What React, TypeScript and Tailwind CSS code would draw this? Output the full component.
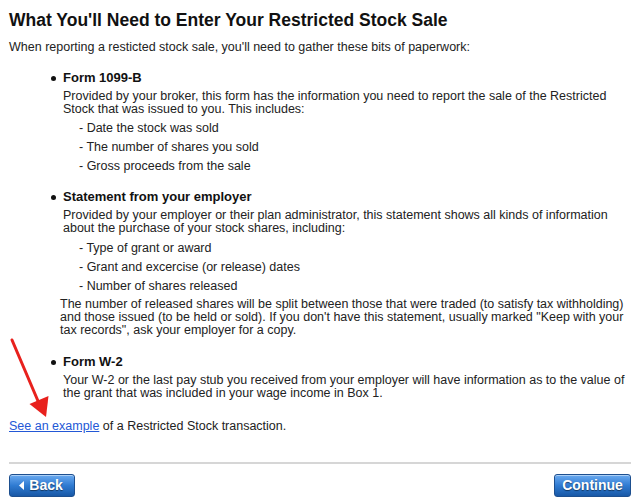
import React from "react"

const dashItem = "ml-[16px] leading-[19px]"

function Bullet({ title, className }: { title: string; className?: string }) {
  return (
    <div className={"flex items-center leading-[16px] " + (className ?? "")}>
      <span className="ml-[42px] mr-[7px] size-[5px] rounded-full bg-[#111]" />
      <span className="text-[13px] font-bold text-[#111]">{title}</span>
    </div>
  )
}

function BlueButton({ children, className }: { children: React.ReactNode; className?: string }) {
  return (
    <button
      type="button"
      className={
        "flex h-[23px] items-center justify-center rounded-[3px] border border-[#1d4f8f] bg-gradient-to-b from-[#6aaaf0] via-[#2f7bd2] to-[#1858a6] text-[14px] font-bold text-white shadow-[inset_0_1px_0_rgba(255,255,255,0.45)] [text-shadow:0_1px_1px_rgba(0,0,0,0.5)] " +
        (className ?? "")
      }
    >
      {children}
    </button>
  )
}

export default function App() {
  return (
    <div className="relative h-[504px] w-[640px] overflow-hidden whitespace-nowrap bg-white px-[9px] pt-[9px] font-['Liberation_Sans',Arial,sans-serif] text-[12.5px] text-[#222]">
      <h1 className="text-[17.5px] font-bold leading-[22px] text-[#111]">
        What You'll Need to Enter Your Restricted Stock Sale
      </h1>
      <p className="mt-[8px] leading-[16px]">
        When reporting a resticted stock sale, you'll need to gather these bits of paperwork:
      </p>

      <Bullet title="Form 1099-B" className="mt-[15px]" />
      <div className="ml-[54px]">
        <p className="mt-[4px] leading-[13px]">
          Provided by your broker, this form has the information you need to report the sale of the Restricted
          <br />
          Stock that was issued to you. This includes:
        </p>
        <ul className="mt-[3px]">
          <li className={dashItem}>- Date the stock was sold</li>
          <li className={dashItem}>- The number of shares you sold</li>
          <li className={dashItem}>- Gross proceeds from the sale</li>
        </ul>
      </div>

      <Bullet title="Statement from your employer" className="mt-[13px]" />
      <div className="ml-[54px]">
        <p className="mt-[4px] leading-[13px]">
          Provided by your employer or their plan administrator, this statement shows all kinds of information
          <br />
          about the purchase of your stock shares, including:
        </p>
        <ul className="mt-[4px]">
          <li className={dashItem}>- Type of grant or award</li>
          <li className={dashItem}>- Grant and excercise (or release) dates</li>
          <li className={dashItem}>- Number of shares released</li>
        </ul>
        <p className="-ml-[3px] mt-[2px] leading-[13px]">
          The number of released shares will be split between those that were traded (to satisfy tax withholding)
          <br />
          and those issued (to be held or sold). If you don't have this statement, usually marked "Keep with your
          <br />
          tax records", ask your employer for a copy.
        </p>
      </div>

      <Bullet title="Form W-2" className="mt-[17px]" />
      <div className="ml-[54px]">
        <p className="mt-[4px] leading-[13px]">
          Your W-2 or the last pay stub you received from your employer will have information as to the value of
          <br />
          the grant that was included in your wage income in Box 1.
        </p>
      </div>

      <p className="mt-[18px] leading-[16px]">
        <a href="#" className="text-[#2358d6] underline">
          See an example
        </a>{" "}
        of a Restricted Stock transaction.
      </p>

      <div className="mt-[28px] h-[2px] bg-[#d6d6d6]" />

      <div className="mt-[10px] flex justify-between">
        <BlueButton className="w-[66px] gap-[5px]">
          <svg width="5" height="9" viewBox="0 0 5 9" className="-ml-[2px]">
            <path d="M5 0 L0 4.5 L5 9 Z" fill="white" />
          </svg>
          Back
        </BlueButton>
        <BlueButton className="w-[77px]">Continue</BlueButton>
      </div>

      <svg className="pointer-events-none absolute left-0 top-0" width="640" height="504">
        <line x1="12" y1="340" x2="38" y2="401" stroke="#e8211d" strokeWidth="3" strokeLinecap="round" />
        <polygon points="29.5,404 48.5,396 46,417" fill="#e8211d" />
      </svg>
    </div>
  )
}
